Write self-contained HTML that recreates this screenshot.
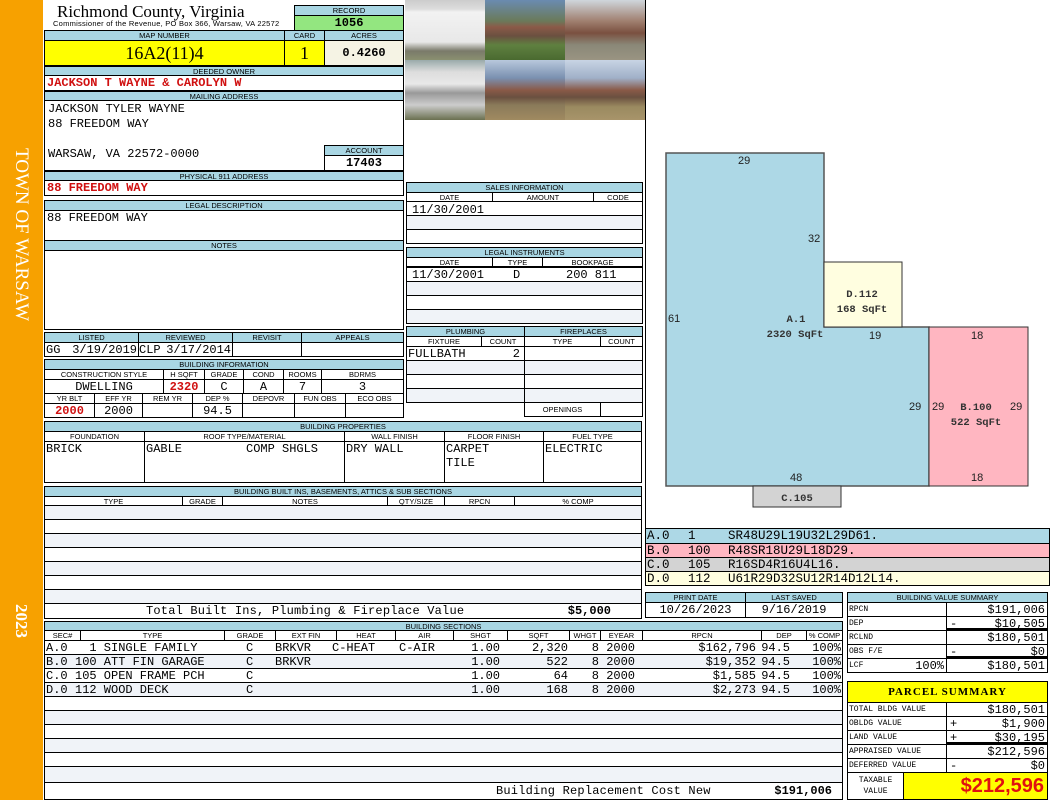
<!DOCTYPE html>
<html><head><meta charset="utf-8"><style>
*{margin:0;padding:0;box-sizing:border-box}
body{width:1050px;height:800px;position:relative;background:#fff;overflow:hidden;font-family:"Liberation Mono",monospace;font-size:12px;color:#000}
div,span.a{position:absolute}
.h{background:#a9d6e3;border:1px solid #000;font:7.5px/9px "Liberation Sans",sans-serif;text-align:center;white-space:nowrap;overflow:hidden}
.c{border:1px solid #000;white-space:nowrap;overflow:hidden;line-height:14px;font-size:12px}
.r{color:#d01010;font-weight:bold}
.cen{text-align:center}.rt{text-align:right;padding-right:2px}
.alt{background:#f0f3f8}
.c span.a{top:0;white-space:pre}
.lb{font-size:8px!important;padding-left:1px}
</style></head><body>
<div style="left:0;top:0;width:43px;height:800px;background:#f7a100"></div>
<div style="left:32px;top:148px;transform:rotate(90deg);transform-origin:0 0;white-space:nowrap;font:19px 'Liberation Serif',serif;color:#fff">TOWN OF WARSAW</div>
<div style="left:31px;top:604px;transform:rotate(90deg);transform-origin:0 0;white-space:nowrap;font:bold 17px 'Liberation Serif',serif;color:#fff">2023</div>

<div style="left:57px;top:2px;font:17px/20px 'Liberation Serif',serif;white-space:nowrap">Richmond County, Virginia</div>
<div style="left:53px;top:20px;font:7.5px/8px 'Liberation Sans',sans-serif;white-space:nowrap;letter-spacing:0.25px">Commissioner of the Revenue, PO Box 366, Warsaw, VA 22572</div>
<div class="h" style="left:294px;top:5px;width:110px;height:11px">RECORD</div>
<div class="c cen" style="left:294px;top:15px;width:110px;height:16px;background:#93e680;font-weight:bold">1056</div>
<div class="h" style="left:44px;top:30px;width:241px;height:11px">MAP NUMBER</div>
<div class="h" style="left:284px;top:30px;width:41px;height:11px">CARD</div>
<div class="h" style="left:324px;top:30px;width:80px;height:11px">ACRES</div>
<div class="c cen" style="left:44px;top:40px;width:241px;height:26px;background:#ffff00;font:18px/24px 'Liberation Serif',serif">16A2(11)4</div>
<div class="c cen" style="left:284px;top:40px;width:41px;height:26px;background:#ffff00;font:18px/24px 'Liberation Serif',serif">1</div>
<div class="c cen" style="left:324px;top:40px;width:80px;height:26px;background:#f5f3e4;font-weight:bold;line-height:24px">0.4260</div>
<div class="h" style="left:44px;top:66px;width:360px;height:10px">DEEDED OWNER</div>
<div class="c r" style="left:44px;top:75px;width:360px;height:16px;padding-left:2px">JACKSON T WAYNE &amp; CAROLYN W</div>
<div class="h" style="left:44px;top:91px;width:360px;height:10px">MAILING ADDRESS</div>
<div class="c" style="left:44px;top:100px;width:360px;height:71px;padding-left:3px;line-height:15px;white-space:pre;padding-top:1px">JACKSON TYLER WAYNE
88 FREEDOM WAY

WARSAW, VA 22572-0000</div>
<div class="h" style="left:324px;top:145px;width:80px;height:11px">ACCOUNT</div>
<div class="c cen" style="left:324px;top:155px;width:80px;height:16px;font-weight:bold">17403</div>
<div class="h" style="left:44px;top:171px;width:360px;height:10px">PHYSICAL 911 ADDRESS</div>
<div class="c r" style="left:44px;top:180px;width:360px;height:16px;padding-left:2px">88 FREEDOM WAY</div>
<div class="h" style="left:44px;top:200px;width:360px;height:11px">LEGAL DESCRIPTION</div>
<div class="c" style="left:44px;top:210px;width:360px;height:31px;padding-left:2px">88 FREEDOM WAY</div>
<div class="h" style="left:44px;top:240px;width:360px;height:11px">NOTES</div>
<div class="c" style="left:44px;top:250px;width:360px;height:80px"></div>

<div class="h" style="left:44px;top:332px;width:95px;height:11px">LISTED</div>
<div class="h" style="left:138px;top:332px;width:95px;height:11px">REVIEWED</div>
<div class="h" style="left:232px;top:332px;width:70px;height:11px">REVISIT</div>
<div class="h" style="left:301px;top:332px;width:103px;height:11px">APPEALS</div>
<div class="c" style="left:44px;top:342px;width:95px;height:15px"><span class="a" style="left:1px">GG</span><span class="a" style="right:1px">3/19/2019</span></div>
<div class="c" style="left:138px;top:342px;width:95px;height:15px"><span class="a" style="left:0">CLP</span><span class="a" style="right:1px">3/17/2014</span></div>
<div class="c" style="left:232px;top:342px;width:70px;height:15px"></div>
<div class="c" style="left:301px;top:342px;width:103px;height:15px"></div>

<div class="h" style="left:44px;top:359px;width:360px;height:11px">BUILDING INFORMATION</div>
<div class="h" style="left:44px;top:369px;width:120px;height:11px;background:#fff">CONSTRUCTION STYLE</div>
<div class="h" style="left:163px;top:369px;width:42px;height:11px;background:#fff">H SQFT</div>
<div class="h" style="left:204px;top:369px;width:40px;height:11px;background:#fff">GRADE</div>
<div class="h" style="left:243px;top:369px;width:41px;height:11px;background:#fff">COND</div>
<div class="h" style="left:283px;top:369px;width:39px;height:11px;background:#fff">ROOMS</div>
<div class="h" style="left:321px;top:369px;width:83px;height:11px;background:#fff">BDRMS</div>
<div class="c cen" style="left:44px;top:379px;width:120px;height:15px">DWELLING</div>
<div class="c cen r" style="left:163px;top:379px;width:42px;height:15px">2320</div>
<div class="c cen" style="left:204px;top:379px;width:40px;height:15px">C</div>
<div class="c cen" style="left:243px;top:379px;width:41px;height:15px">A</div>
<div class="c cen" style="left:283px;top:379px;width:39px;height:15px">7</div>
<div class="c cen" style="left:321px;top:379px;width:83px;height:15px">3</div>
<div class="h" style="left:44px;top:393px;width:51px;height:11px;background:#fff">YR BLT</div>
<div class="h" style="left:94px;top:393px;width:49px;height:11px;background:#fff">EFF YR</div>
<div class="h" style="left:142px;top:393px;width:51px;height:11px;background:#fff">REM YR</div>
<div class="h" style="left:192px;top:393px;width:51px;height:11px;background:#fff">DEP %</div>
<div class="h" style="left:242px;top:393px;width:53px;height:11px;background:#fff">DEPOVR</div>
<div class="h" style="left:294px;top:393px;width:52px;height:11px;background:#fff">FUN OBS</div>
<div class="h" style="left:345px;top:393px;width:59px;height:11px;background:#fff">ECO OBS</div>
<div class="c cen r" style="left:44px;top:403px;width:51px;height:15px">2000</div>
<div class="c cen" style="left:94px;top:403px;width:49px;height:15px">2000</div>
<div class="c" style="left:142px;top:403px;width:51px;height:15px"></div>
<div class="c cen" style="left:192px;top:403px;width:51px;height:15px">94.5</div>
<div class="c" style="left:242px;top:403px;width:53px;height:15px"></div>
<div class="c" style="left:294px;top:403px;width:52px;height:15px"></div>
<div class="c" style="left:345px;top:403px;width:59px;height:15px"></div>

<div class="h" style="left:44px;top:421px;width:598px;height:11px">BUILDING PROPERTIES</div>
<div class="h" style="left:44px;top:431px;width:101px;height:11px;background:#fff">FOUNDATION</div>
<div class="h" style="left:144px;top:431px;width:201px;height:11px;background:#fff">ROOF TYPE/MATERIAL</div>
<div class="h" style="left:344px;top:431px;width:101px;height:11px;background:#fff">WALL FINISH</div>
<div class="h" style="left:444px;top:431px;width:100px;height:11px;background:#fff">FLOOR FINISH</div>
<div class="h" style="left:543px;top:431px;width:99px;height:11px;background:#fff">FUEL TYPE</div>
<div class="c" style="left:44px;top:441px;width:101px;height:42px;padding-left:1px">BRICK</div>
<div class="c" style="left:144px;top:441px;width:201px;height:42px"><span class="a" style="left:1px">GABLE</span><span class="a" style="left:101px">COMP SHGLS</span></div>
<div class="c" style="left:344px;top:441px;width:101px;height:42px;padding-left:1px">DRY WALL</div>
<div class="c" style="left:444px;top:441px;width:100px;height:42px;padding-left:1px;line-height:14px">CARPET<br>TILE</div>
<div class="c" style="left:543px;top:441px;width:99px;height:42px;padding-left:1px">ELECTRIC</div>

<div class="h" style="left:44px;top:486px;width:598px;height:11px">BUILDING BUILT INS, BASEMENTS, ATTICS &amp; SUB SECTIONS</div>
<div class="h" style="left:44px;top:496px;width:139px;height:10px;background:#fff">TYPE</div>
<div class="h" style="left:182px;top:496px;width:41px;height:10px;background:#fff">GRADE</div>
<div class="h" style="left:222px;top:496px;width:166px;height:10px;background:#fff">NOTES</div>
<div class="h" style="left:387px;top:496px;width:58px;height:10px;background:#fff">QTY/SIZE</div>
<div class="h" style="left:444px;top:496px;width:71px;height:10px;background:#fff">RPCN</div>
<div class="h" style="left:514px;top:496px;width:128px;height:10px;background:#fff">% COMP</div>
<div class="c alt" style="left:44px;top:505px;width:598px;height:15px"></div>
<div class="c" style="left:44px;top:519px;width:598px;height:15px"></div>
<div class="c alt" style="left:44px;top:533px;width:598px;height:15px"></div>
<div class="c" style="left:44px;top:547px;width:598px;height:15px"></div>
<div class="c alt" style="left:44px;top:561px;width:598px;height:15px"></div>
<div class="c" style="left:44px;top:575px;width:598px;height:15px"></div>
<div class="c alt" style="left:44px;top:589px;width:598px;height:15px"></div>
<div class="c" style="left:44px;top:603px;width:598px;height:16px"><span class="a" style="left:101px;letter-spacing:0.2px">Total Built Ins, Plumbing &amp; Fireplace Value</span><span class="a" style="right:30px;font-weight:bold">$5,000</span></div>

<div class="h" style="left:44px;top:621px;width:799px;height:10px">BUILDING SECTIONS</div>
<div class="h" style="left:44px;top:630px;width:37px;height:11px;background:#fff">SEC#</div>
<div class="h" style="left:80px;top:630px;width:145px;height:11px;background:#fff">TYPE</div>
<div class="h" style="left:224px;top:630px;width:52px;height:11px;background:#fff">GRADE</div>
<div class="h" style="left:275px;top:630px;width:62px;height:11px;background:#fff">EXT FIN</div>
<div class="h" style="left:336px;top:630px;width:60px;height:11px;background:#fff">HEAT</div>
<div class="h" style="left:395px;top:630px;width:59px;height:11px;background:#fff">AIR</div>
<div class="h" style="left:453px;top:630px;width:55px;height:11px;background:#fff">SHGT</div>
<div class="h" style="left:507px;top:630px;width:63px;height:11px;background:#fff">SQFT</div>
<div class="h" style="left:569px;top:630px;width:32px;height:11px;background:#fff">WHGT</div>
<div class="h" style="left:600px;top:630px;width:43px;height:11px;background:#fff">EYEAR</div>
<div class="h" style="left:642px;top:630px;width:120px;height:11px;background:#fff">RPCN</div>
<div class="h" style="left:761px;top:630px;width:46px;height:11px;background:#fff">DEP</div>
<div class="h" style="left:806px;top:630px;width:37px;height:11px;background:#fff">% COMP</div>

<div class="c" style="left:44px;top:640px;width:799px;height:15px"><span class="a" style="left:1px">A.0</span><span class="a" style="left:30px">  1 SINGLE FAMILY</span><span class="a" style="left:201px">C</span><span class="a" style="left:230px">BRKVR</span><span class="a" style="left:287px">C-HEAT</span><span class="a" style="left:354px">C-AIR</span><span class="a" style="right:342px">1.00</span><span class="a" style="right:274px">2,320</span><span class="a" style="right:243px">8</span><span class="a" style="right:207px">2000</span><span class="a" style="right:86px">$162,796</span><span class="a" style="right:52px">94.5</span><span class="a" style="right:1px">100%</span></div>
<div class="c alt" style="left:44px;top:654px;width:799px;height:15px"><span class="a" style="left:1px">B.0</span><span class="a" style="left:30px">100 ATT FIN GARAGE</span><span class="a" style="left:201px">C</span><span class="a" style="left:230px">BRKVR</span><span class="a" style="right:342px">1.00</span><span class="a" style="right:274px">522</span><span class="a" style="right:243px">8</span><span class="a" style="right:207px">2000</span><span class="a" style="right:86px">$19,352</span><span class="a" style="right:52px">94.5</span><span class="a" style="right:1px">100%</span></div>
<div class="c" style="left:44px;top:668px;width:799px;height:15px"><span class="a" style="left:1px">C.0</span><span class="a" style="left:30px">105 OPEN FRAME PCH</span><span class="a" style="left:201px">C</span><span class="a" style="right:342px">1.00</span><span class="a" style="right:274px">64</span><span class="a" style="right:243px">8</span><span class="a" style="right:207px">2000</span><span class="a" style="right:86px">$1,585</span><span class="a" style="right:52px">94.5</span><span class="a" style="right:1px">100%</span></div>
<div class="c alt" style="left:44px;top:682px;width:799px;height:15px"><span class="a" style="left:1px">D.0</span><span class="a" style="left:30px">112 WOOD DECK</span><span class="a" style="left:201px">C</span><span class="a" style="right:342px">1.00</span><span class="a" style="right:274px">168</span><span class="a" style="right:243px">8</span><span class="a" style="right:207px">2000</span><span class="a" style="right:86px">$2,273</span><span class="a" style="right:52px">94.5</span><span class="a" style="right:1px">100%</span></div>
<div class="c" style="left:44px;top:696px;width:799px;height:15px"></div>
<div class="c alt" style="left:44px;top:710px;width:799px;height:15px"></div>
<div class="c" style="left:44px;top:724px;width:799px;height:15px"></div>
<div class="c alt" style="left:44px;top:738px;width:799px;height:15px"></div>
<div class="c" style="left:44px;top:752px;width:799px;height:15px"></div>
<div class="c alt" style="left:44px;top:766px;width:799px;height:17px"></div>
<div class="c" style="left:44px;top:782px;width:799px;height:18px;line-height:17px"><span class="a" style="left:451px;letter-spacing:0.2px">Building Replacement Cost New</span><span class="a" style="right:10px;font-weight:bold">$191,006</span></div>

<div style="left:405px;top:0;width:80px;height:60px;background:linear-gradient(#ccc 0,#ddd 15%,#f2f2f2 20%,#e8e8e8 70%,#7a7a6a 85%,#8a9070 100%)"></div>
<div style="left:485px;top:0;width:80px;height:60px;background:linear-gradient(#6a8bb0 0,#6a7a5a 35%,#8b5a48 45%,#6a5040 60%,#5f8040 75%,#4a6a30 100%)"></div>
<div style="left:565px;top:0;width:80px;height:60px;background:linear-gradient(#cfd6dc 0,#a08070 35%,#7a5040 55%,#8a8878 75%,#9a9482 100%)"></div>
<div style="left:405px;top:60px;width:80px;height:60px;background:linear-gradient(#9aa 0,#ddd 20%,#e8e8e8 40%,#999 55%,#ccc 75%,#6a7050 100%)"></div>
<div style="left:485px;top:60px;width:80px;height:60px;background:linear-gradient(#b8c8dc 0,#7a90b0 30%,#8a5a48 50%,#6a5040 62%,#8a7a5a 75%,#a08a60 100%)"></div>
<div style="left:565px;top:60px;width:80px;height:60px;background:linear-gradient(#c8d4e4 0,#a0b0c8 30%,#8a5a48 50%,#6a5040 62%,#9a8a60 78%,#a8946a 100%)"></div>

<div class="h" style="left:406px;top:182px;width:237px;height:11px">SALES INFORMATION</div>
<div class="h" style="left:406px;top:192px;width:87px;height:10px;background:#fff">DATE</div>
<div class="h" style="left:492px;top:192px;width:102px;height:10px;background:#fff">AMOUNT</div>
<div class="h" style="left:593px;top:192px;width:50px;height:10px;background:#fff">CODE</div>
<div class="c" style="left:406px;top:201px;width:237px;height:15px;padding-left:5px;padding-top:1px">11/30/2001</div>
<div class="c alt" style="left:406px;top:215px;width:237px;height:15px"></div>
<div class="c" style="left:406px;top:229px;width:237px;height:15px"></div>
<div class="h" style="left:406px;top:247px;width:237px;height:11px">LEGAL INSTRUMENTS</div>
<div class="h" style="left:406px;top:257px;width:87px;height:10px;background:#fff">DATE</div>
<div class="h" style="left:492px;top:257px;width:51px;height:10px;background:#fff">TYPE</div>
<div class="h" style="left:542px;top:257px;width:101px;height:10px;background:#fff">BOOKPAGE</div>
<div class="c" style="left:406px;top:267px;width:237px;height:15px"><span class="a" style="left:5px">11/30/2001</span><span class="a" style="left:106px">D</span><span class="a" style="left:159px">200 811</span></div>
<div class="c alt" style="left:406px;top:281px;width:237px;height:15px"></div>
<div class="c" style="left:406px;top:295px;width:237px;height:15px"></div>
<div class="c alt" style="left:406px;top:309px;width:237px;height:15px"></div>

<div class="h" style="left:406px;top:326px;width:119px;height:11px">PLUMBING</div>
<div class="h" style="left:524px;top:326px;width:119px;height:11px">FIREPLACES</div>
<div class="h" style="left:406px;top:336px;width:76px;height:11px;background:#fff">FIXTURE</div>
<div class="h" style="left:481px;top:336px;width:44px;height:11px;background:#fff">COUNT</div>
<div class="h" style="left:524px;top:336px;width:77px;height:11px;background:#fff">TYPE</div>
<div class="h" style="left:600px;top:336px;width:43px;height:11px;background:#fff">COUNT</div>
<div class="c" style="left:406px;top:346px;width:119px;height:15px"><span class="a" style="left:1px">FULLBATH</span><span class="a" style="right:4px">2</span></div>
<div class="c alt" style="left:406px;top:360px;width:119px;height:15px"></div>
<div class="c" style="left:406px;top:374px;width:119px;height:15px"></div>
<div class="c alt" style="left:406px;top:388px;width:119px;height:15px"></div>
<div class="c" style="left:524px;top:346px;width:119px;height:15px"></div>
<div class="c alt" style="left:524px;top:360px;width:119px;height:15px"></div>
<div class="c" style="left:524px;top:374px;width:119px;height:15px"></div>
<div class="c alt" style="left:524px;top:388px;width:119px;height:15px"></div>
<div class="h" style="left:524px;top:402px;width:77px;height:15px;background:#fff;line-height:13px">OPENINGS</div>
<div class="c" style="left:600px;top:402px;width:43px;height:15px"></div>

<div style="left:645px;top:0;width:1px;height:528px;background:#000"></div>
<svg style="position:absolute;left:0;top:0" width="1050" height="530">
<polygon points="666,153 824,153 824,327 929,327 929,486 666,486" fill="#add8e6" stroke="#555" stroke-width="1.5"/>
<rect x="824" y="262" width="78" height="65" fill="#fffee0" stroke="#333"/>
<rect x="929" y="327" width="99" height="159" fill="#ffb6c1" stroke="#333"/>
<rect x="753" y="486" width="88" height="21" fill="#d3d3d3" stroke="#333"/>
<g font-family="Liberation Sans,sans-serif" font-size="11" fill="#222">
<text x="738" y="164">29</text><text x="808" y="242">32</text><text x="668" y="322">61</text>
<text x="869" y="339">19</text><text x="909" y="410">29</text><text x="932" y="410">29</text>
<text x="1010" y="410">29</text><text x="971" y="339">18</text><text x="971" y="481">18</text><text x="790" y="481">48</text>
</g>
<g font-family="Liberation Mono,monospace" font-size="10.5" font-weight="bold" fill="#333" text-anchor="middle">
<text x="796" y="322">A.1</text><text x="795" y="337">2320 SqFt</text>
<text x="862" y="297">D.112</text><text x="862" y="312">168 SqFt</text>
<text x="976" y="410">B.100</text><text x="976" y="425">522 SqFt</text>
<text x="797" y="501">C.105</text>
</g>
</svg>
<div class="c" style="left:645px;top:528px;width:405px;height:16px;background:#add8e6;font-size:12.5px"><span class="a" style="left:1px">A.0</span><span class="a" style="left:42px">1</span><span class="a" style="left:82px">SR48U29L19U32L29D61.</span></div>
<div class="c" style="left:645px;top:543px;width:405px;height:15px;background:#ffb6c1;font-size:12.5px"><span class="a" style="left:1px">B.0</span><span class="a" style="left:42px">100</span><span class="a" style="left:82px">R48SR18U29L18D29.</span></div>
<div class="c" style="left:645px;top:557px;width:405px;height:15px;background:#d3d3d3;font-size:12.5px"><span class="a" style="left:1px">C.0</span><span class="a" style="left:42px">105</span><span class="a" style="left:82px">R16SD4R16U4L16.</span></div>
<div class="c" style="left:645px;top:571px;width:405px;height:15px;background:#fffee0;font-size:12.5px"><span class="a" style="left:1px">D.0</span><span class="a" style="left:42px">112</span><span class="a" style="left:82px">U61R29D32SU12R14D12L14.</span></div>

<div class="h" style="left:645px;top:592px;width:101px;height:11px">PRINT DATE</div>
<div class="h" style="left:745px;top:592px;width:98px;height:11px">LAST SAVED</div>
<div class="c cen" style="left:645px;top:602px;width:101px;height:16px">10/26/2023</div>
<div class="c cen" style="left:745px;top:602px;width:98px;height:16px">9/16/2019</div>

<div class="h" style="left:847px;top:592px;width:201px;height:11px">BUILDING VALUE SUMMARY</div>
<div class="c lb" style="left:847px;top:602px;width:100px;height:15px">RPCN</div>
<div class="c rt" style="left:946px;top:602px;width:102px;height:15px">$191,006</div>
<div class="c lb" style="left:847px;top:616px;width:100px;height:15px">DEP</div>
<div class="c" style="left:946px;top:616px;width:102px;height:15px;border-bottom:3px solid #000"><span class="a" style="left:3px">-</span><span class="a" style="right:2px">$10,505</span></div>
<div class="c lb" style="left:847px;top:630px;width:100px;height:15px">RCLND</div>
<div class="c rt" style="left:946px;top:630px;width:102px;height:15px">$180,501</div>
<div class="c lb" style="left:847px;top:644px;width:100px;height:15px">OBS F/E</div>
<div class="c" style="left:946px;top:644px;width:102px;height:15px;border-bottom:3px solid #000"><span class="a" style="left:3px">-</span><span class="a" style="right:2px">$0</span></div>
<div class="c lb" style="left:847px;top:658px;width:100px;height:15px"><span class="a" style="left:1px">LCF</span><span class="a" style="right:2px;font-size:12px">100%</span></div>
<div class="c rt" style="left:946px;top:658px;width:102px;height:15px">$180,501</div>

<div class="c cen" style="left:847px;top:681px;width:201px;height:22px;background:#ffff00;font-weight:bold;line-height:20px;font-size:11px;font-family:'Liberation Serif',serif;letter-spacing:1px">PARCEL SUMMARY</div>
<div class="c lb" style="left:847px;top:702px;width:100px;height:15px">TOTAL BLDG VALUE</div>
<div class="c rt" style="left:946px;top:702px;width:102px;height:15px">$180,501</div>
<div class="c lb" style="left:847px;top:716px;width:100px;height:15px">OBLDG VALUE</div>
<div class="c" style="left:946px;top:716px;width:102px;height:15px"><span class="a" style="left:3px">+</span><span class="a" style="right:2px">$1,900</span></div>
<div class="c lb" style="left:847px;top:730px;width:100px;height:15px">LAND VALUE</div>
<div class="c" style="left:946px;top:730px;width:102px;height:15px;border-bottom:3px solid #000"><span class="a" style="left:3px">+</span><span class="a" style="right:2px">$30,195</span></div>
<div class="c lb" style="left:847px;top:744px;width:100px;height:15px">APPRAISED VALUE</div>
<div class="c rt" style="left:946px;top:744px;width:102px;height:15px">$212,596</div>
<div class="c lb" style="left:847px;top:758px;width:100px;height:15px">DEFERRED VALUE</div>
<div class="c" style="left:946px;top:758px;width:102px;height:15px"><span class="a" style="left:3px">-</span><span class="a" style="right:2px">$0</span></div>
<div class="c cen" style="left:847px;top:772px;width:57px;height:28px;font-size:8px;line-height:11px;padding-top:2px">TAXABLE<br>VALUE</div>
<div class="c" style="left:903px;top:772px;width:145px;height:28px;background:#ffff00;color:#e01010;font:bold 20px/26px 'Liberation Sans',sans-serif;text-align:right;padding-right:3px">$212,596</div>
</body></html>
